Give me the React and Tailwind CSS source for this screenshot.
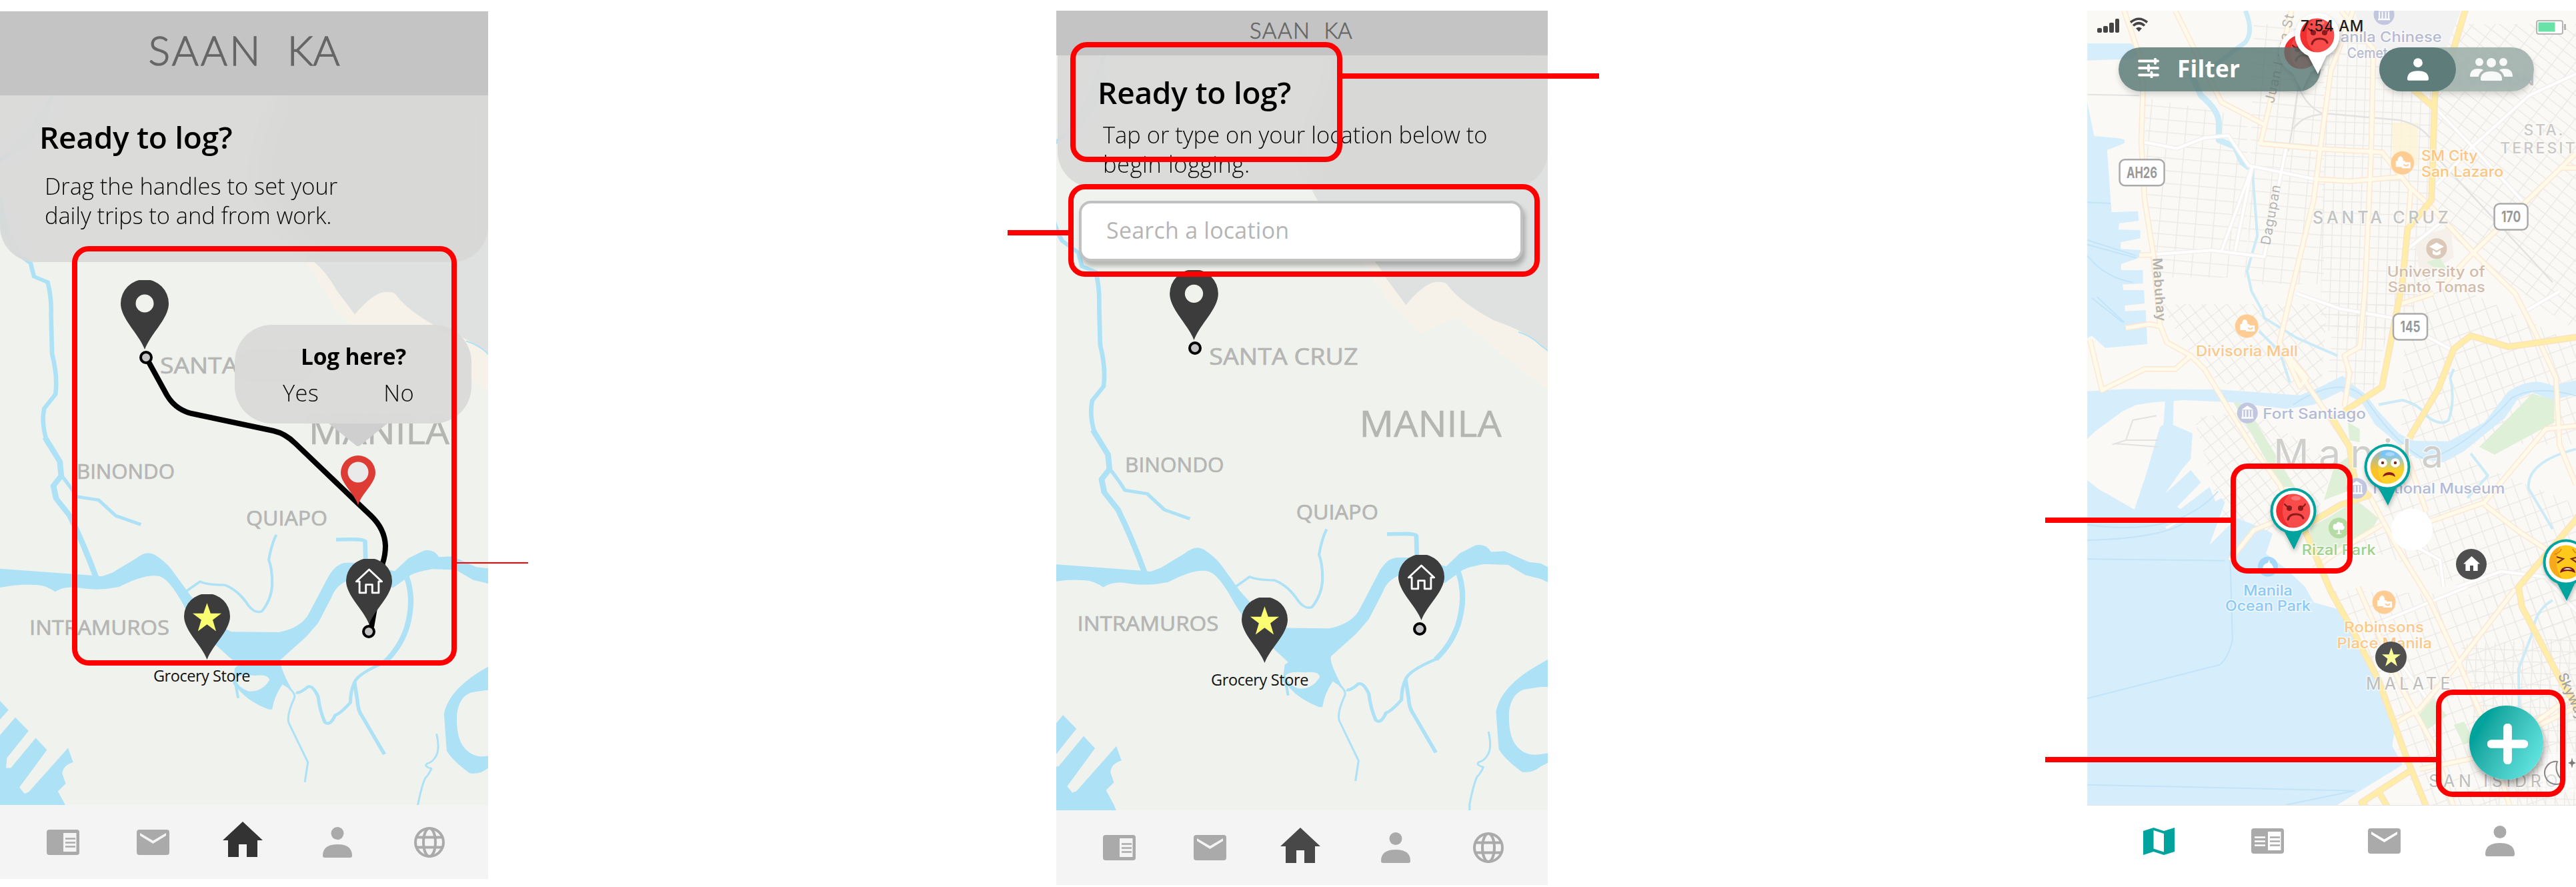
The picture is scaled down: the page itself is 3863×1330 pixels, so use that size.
import { useLayoutEffect, useRef, useState } from "react";

/* Text whose tracking is computed so that it fills a given width. */
function Fit({ w, className = "", children }) {
  const ref = useRef(null);
  const [ls, setLs] = useState(0);
  useLayoutEffect(() => {
    const n = ref.current.textContent.length;
    setLs((w - ref.current.offsetWidth) / n);
  }, [w]);
  return (
    <span className={"block w-max whitespace-nowrap " + className}>
      <span ref={ref} className="inline-block" style={{ letterSpacing: ls + "px" }}>{children}</span>
    </span>
  );
}

const WATER = "#ade1f6";
const LABEL = "#b5b6b4";

function MapText({ x, y, w, s, children }) {
  return (
    <text x={x} y={y} textLength={w} lengthAdjust="spacingAndGlyphs" fontSize={s} fill={LABEL} stroke={LABEL} strokeWidth="0.7" strokeLinejoin="round" fontFamily="'Open Sans', sans-serif">
      {children}
    </text>
  );
}

function GrayMap({ viewBox, className }) {
  return (
    <svg viewBox={viewBox} preserveAspectRatio="none" className={className}>
      <rect width="800" height="1330" fill="#f0f2ed" />
      <g transform="scale(0.5102,0.4209)">
        <path d="M800 780 L900 935 L985 1100 L1060 1190 L1080 1220 L1190 1165 L1300 1270 L1400 1370 L1500 1450 V1100 L1000 900Z" fill="#f6f2ea" />
        <path d="M820 40 L820 345 Q745 520 750 650 Q770 760 850 840 L925 935 Q960 970 990 1035 L1043 1120 Q1095 1045 1130 1040 Q1160 1038 1165 1052 Q1200 1110 1300 1175 Q1390 1210 1435 1262 L1500 1320 V40Z" fill="#dee1df" />
        <path d="M1370 1215 Q1410 1230 1435 1262 L1500 1320" fill="none" stroke={WATER} strokeWidth="4" />
        <path d="M170 180 L150 345 Q120 480 0 570 L-20 600 M0 700 Q10 830 42 895 L90 938 L100 985 L140 1005 Q152 1060 150 1120 L153 1260 Q170 1340 163 1405 L130 1455 Q120 1510 140 1580" fill="none" stroke={WATER} strokeWidth="13" />
      </g>
      <g transform="translate(0,660) scale(0.5102,0.42735)" fill="none" stroke={WATER} strokeLinejoin="round">
        <path d="M132 -10 L176 75 L180 125 L157 160 L165 205 L205 265 Q245 360 285 490" strokeWidth="17" />
        <path d="M185 130 L210 170 L225 198 L290 210 L340 265 L414 296" strokeWidth="11" />
        <path stroke="none" fill={WATER} d="M-20 449 L275 475 L300 478 L330 465 L400 415 Q430 385 455 402 Q490 430 505 455 L560 545 L640 650 L680 672 L820 674 Q880 660 905 615 L960 490 Q985 430 1020 430 L1070 430 L1160 460 L1200 415 L1245 388 Q1275 380 1290 410 L1330 408 L1400 445 L1435 450 L1500 490 V540 L1435 503 L1390 490 L1340 455 L1270 452 Q1210 465 1200 480 L1155 518 L1070 480 Q995 485 975 550 L935 642 L900 690 L825 770 Q818 790 860 880 L830 857 Q805 900 800 945 L790 945 Q735 920 705 880 L685 855 L690 800 L700 790 L640 725 L600 690 L545 590 Q500 490 470 478 Q430 465 350 515 Q290 530 230 518 Q190 510 162 532 Q130 505 100 508 Q50 503 -20 522Z" />
        <path stroke="none" fill="#f0f2ed" d="M692 838 Q700 820 750 826 Q790 820 792 842 Q770 885 730 881 Q700 870 692 838Z" />
        <path d="M690 840 L700 905 M545 532 L588 496 Q610 508 660 508 Q700 525 730 580 Q750 610 770 600 Q800 555 800 500 Q800 450 790 420 Q798 365 812 332" strokeWidth="8" />
        <path d="M988 349 L1030 348 Q1070 347 1073 355 L1075 440" strokeWidth="13" />
        <path d="M1195 480 Q1220 560 1195 660 Q1175 730 1130 780 Q1050 820 1042 850 Q1030 880 1030 920 Q1000 960 985 965 Q970 1005 955 990 Q940 950 935 900 Q920 860 905 865 Q880 890 870 885" strokeWidth="10" />
        <path d="M1195 480 Q1220 560 1195 660 Q1175 730 1130 780" strokeWidth="16" />
        <path d="M1042 850 L1050 910 Q1052 950 1065 970 L1130 1102" strokeWidth="11" />
        <path d="M850 870 Q870 890 865 905 Q840 970 850 995 L905 1130 L896 1200 M1283 1030 Q1295 1090 1278 1115 Q1270 1130 1255 1135 Q1245 1145 1268 1152 Q1260 1175 1250 1185 Q1240 1210 1228 1280 V1310" strokeWidth="6" />
        <path stroke="none" fill={WATER} d="M1500 750 L1435 795 Q1320 870 1305 960 L1313 1090 Q1330 1125 1380 1168 Q1410 1175 1435 1150 L1500 1110 V1095 L1435 1108 Q1390 1118 1362 1075 Q1340 1040 1343 960 Q1350 900 1385 885 L1435 876 H1500Z" />
        <path stroke="none" fill={WATER} d="M0 915 L25 947 L0 980Z M0 1035 L45 973 L84 1020 L20 1115 L18 1150 L32 1150 L105 1045 L138 1087 L57 1218 L72 1240 L84 1235 L200 1080 L215 1130 Q185 1140 183 1170 L193 1205 L170 1232 L192 1280 L210 1330 H0Z" />
      </g>
      <MapText x={240} y={559.5} w={221} s={33.5}>SANTA CRUZ</MapText>
      <MapText x={463} y={666} w={211} s={53}>MANILA</MapText>
      <MapText x={115} y={717.5} w={147} s={31}>BINONDO</MapText>
      <MapText x={369} y={787.5} w={122} s={31}>QUIAPO</MapText>
      <MapText x={44} y={952} w={210} s={31}>INTRAMUROS</MapText>
    </svg>
  );
}

/* Icons */
const PIN = "M36 104 C27 80 0 58 0 35 A36 36 0 0 1 72 35 C72 58 45 80 36 104Z";
const STAR = "M12 0 L15 8.8 H24 L16.8 14.4 L19.6 24 L12 18.2 L4.4 24 L7.2 14.4 L0 8.8 H9Z";

function HolePin({ className }) {
  return (
    <svg viewBox="0 0 72 104" className={className}>
      <path d={PIN} fill="#3c3c3c" />
      <circle cx="36" cy="35" r="13.5" fill="#f0f2ed" />
    </svg>
  );
}
function HomePin({ className }) {
  return (
    <svg viewBox="0 0 72 104" preserveAspectRatio="none" className={className}>
      <path d={PIN} fill="#3c3c3c" />
      <path d="M36 17 L16 36 H21 V54 H31 V41 H41 V54 H51 V36 H56Z" fill="none" stroke="#fff" strokeWidth="3" strokeLinejoin="round" />
    </svg>
  );
}
function StarPin({ className }) {
  return (
    <svg viewBox="0 0 72 104" preserveAspectRatio="none" className={className}>
      <path d={PIN} fill="#3c3c3c" />
      <path d={STAR} transform="translate(13.5,14) scale(1.87)" fill="#fafd72" />
    </svg>
  );
}
const Dot = ({ className }) => (
  <div className={"absolute size-[20px] rounded-full border-[4.500px] border-black bg-[#c4c4c4] " + className} />
);

function Article({ both, bg = "#f4f4f4" }) {
  return (
    <svg viewBox="0 0 49 38" className="w-[49px] h-[38px]">
      <rect width="49" height="38" rx="4" fill="#aaa" />
      <rect x="25" y="5" width="19.500" height="28" fill={bg} />
      <path d="M28 13.500 H43 M28 19.500 H43 M28 25.500 H43" stroke="#aaa" strokeWidth="2.600" />
      {both && <path d="M5 13.500 H21 M5 19.500 H21 M5 25.500 H21" stroke={bg} strokeWidth="2.600" />}
    </svg>
  );
}
function Mail({ bg = "#f4f4f4" }) {
  return (
    <svg viewBox="0 0 49 38" className="w-[49px] h-[38px]">
      <rect width="49" height="38" rx="4" fill="#aaa" />
      <path d="M5 5 L24.500 16.500 L44 5 V9 L24.500 21 L5 9Z" fill={bg} />
    </svg>
  );
}
function House({ color, className = "w-[60px] h-[53px]" }) {
  return (
    <svg viewBox="0 0 60 53" className={className}>
      <path d="M30 0 L60 28 H52 V53 H36 V34 H24 V53 H8 V28 H0Z" fill={color} />
    </svg>
  );
}
function Person({ color = "#aaa", className = "w-[44px] h-[46px]" }) {
  return (
    <svg viewBox="0 0 44 46" className={className}>
      <circle cx="22" cy="9.500" r="9.500" fill={color} />
      <path d="M0 43 Q0 26 22 26 Q44 26 44 43 Q44 46 41 46 H3 Q0 46 0 43Z" fill={color} />
    </svg>
  );
}
function Globe() {
  return (
    <svg viewBox="0 0 46 46" className="size-[46px]" fill="none" stroke="#aaa" strokeWidth="4">
      <circle cx="23" cy="23" r="21" />
      <ellipse cx="23" cy="23" rx="9" ry="21" />
      <path d="M4 15.500 H42 M4 30.500 H42" />
    </svg>
  );
}

function GrayNav({ className, house }) {
  return (
    <nav className={"relative flex items-center bg-[#f4f4f4] " + className}>
      <Article />
      <Mail />
      <div className="-ml-[6px] mb-2"><House color={house} /></div>
      <div className="ml-[4px]"><Person /></div>
      <div className="ml-[7px]"><Globe /></div>
    </nav>
  );
}

function PhoneRoute() {
  return (
    <section className="relative mt-[17px] h-[1301px] w-[732px] flex flex-col">
      <GrayMap viewBox="0 17 732 1190" className="absolute left-0 top-0 w-[732px] h-[1190px]" />
      <header className="relative flex h-[126px] items-center justify-center gap-[37px] bg-[#c4c4c4] pb-[11px] font-['Lato',sans-serif] text-[61px] font-light text-[#666] [-webkit-text-stroke:1.4px_#666]">
        <Fit w={171}>SAAN</Fit>
        <Fit w={79}>KA</Fit>
      </header>
      <div className="relative h-[250px] rounded-b-[54px] bg-[#d7d7d6]/85 pl-[59px] pt-[32px] text-black backdrop-blur-[14px]">
        <Fit w={289} className="text-[46px] leading-[60px] font-semibold">Ready to log?</Fit>
        <div className="mt-[22px] pl-[8px] text-[34.500px] leading-[43.500px] font-light text-[#0a0a0a]">
          <Fit w={439}>Drag the handles to set your</Fit>
          <Fit w={430}>daily trips to and from work.</Fit>
        </div>
      </div>
      <div className="relative flex-1">
        <HolePin className="absolute left-[181px] top-[27px] w-[72px] h-[104px]" />
        <svg viewBox="0 393 732 814" className="absolute left-0 top-0 w-[732px] h-[814px]">
          <path d="M222 541 L250 592 Q264 616 292 621 L410 646 Q428 650 443 665 L537 755 L556 773 Q577 793 578 818 Q578 832 574 844 L557 940" fill="none" stroke="#000" strokeWidth="8" />
          <path d="M537 757.500 C532 740 511 725 511 709 A26 26 0 0 1 563 709 C563 725 542 740 537 757.500Z" fill="#df3b35" />
          <ellipse cx="537" cy="708" rx="15.500" ry="15.500" fill="#eaeaea" />
        </svg>
        <Dot className="left-[208.500px] top-[133px]" />
        <HomePin className="absolute left-[519px] top-[445px] w-[69px] h-[98px]" />
        <Dot className="left-[542.500px] top-[544px]" />
        <StarPin className="absolute left-[276px] top-[498px] w-[69px] h-[98px]" />
        <Fit w={145} className="absolute left-[230px] top-[606px] text-[23.500px] leading-[28px] text-[#111]">Grocery Store</Fit>
        <div className="absolute left-[352px] top-[94px] h-[148px] w-[355px] rounded-[56px] bg-[#d9d9d8]/95 text-center text-black backdrop-blur-[10px]">
          <Fit w={158} className="ml-[99px] mt-[25px] text-[33.500px] leading-[44px] font-bold">Log here?</Fit>
          <div className="mt-[11px] flex text-[34.500px] leading-[44px] font-light text-[#0a0a0a]">
            <Fit w={54} className="ml-[72px]">Yes</Fit>
            <Fit w={46} className="ml-[97px]">No</Fit>
          </div>
        </div>
        <svg viewBox="0 0 88 35" className="absolute left-[493px] top-[242px] w-[88px] h-[35px]"><path d="M0 0 H88 L47 33 Q44 35 41 33Z" fill="#cfcfcf" /></svg>
      </div>
      <GrayNav className="h-[111px] gap-[86px] pl-[70px]" house="#333" />
      <div className="absolute left-[108px] top-[352px] h-[629px] w-[577px] rounded-[25px] border-8 border-[#f00]" />
      <div className="absolute left-[685px] top-[826px] h-[2px] w-[107px] bg-[#f00]" />
    </section>
  );
}

function PhoneSearch() {
  return (
    <section className="relative ml-[852px] mt-[16px] h-[1311px] w-[737px] flex flex-col">
      <GrayMap viewBox="12.9 38 729.7 1178" className="absolute left-0 top-0 w-[737px] h-[1199px]" />
      <header className="relative flex h-[67px] items-center justify-center gap-[20px] bg-[#c4c4c4] pb-[7px] pr-[4px] font-['Lato',sans-serif] text-[33px] font-light text-[#666] [-webkit-text-stroke:0.700px_#666]">
        <Fit w={92}>SAAN</Fit>
        <Fit w={42}>KA</Fit>
      </header>
      <div className="relative ml-[2px] h-[198px] rounded-b-[54px] bg-[#d7d7d6]/85 pl-[60px] pt-[25px] text-black backdrop-blur-[14px]">
        <Fit w={290} className="text-[46px] leading-[60px] font-semibold">Ready to log?</Fit>
        <div className="mt-[12px] pl-[8px] text-[34.500px] leading-[43.500px] font-light text-[#0a0a0a]">
          <Fit w={576}>Tap or type on your location below to</Fit>
          <Fit w={221}>begin logging.</Fit>
        </div>
      </div>
      <div className="relative ml-[34px] mt-[20px] flex h-[91px] w-[666px] items-center rounded-[18px] border-4 border-[#c1c1c1] bg-white pl-[37px] pb-[2px] text-[34px] text-[#b5b5b5] shadow-[3px_7px_7px_rgba(0,0,0,0.25)]">
        <Fit w={274}>Search a location</Fit>
      </div>
      <div className="relative flex-1">
        <HolePin className="absolute left-[170px] top-[13px] w-[73px] h-[105px]" />
        <Dot className="left-[198px] top-[120px]" />
        <HomePin className="absolute left-[513px] top-[440px] w-[69px] h-[98px]" />
        <Dot className="left-[534.500px] top-[540.500px]" />
        <StarPin className="absolute left-[278px] top-[504px] w-[69px] h-[98px]" />
        <Fit w={146} className="absolute left-[232px] top-[613px] text-[23.500px] leading-[28px] text-[#111]">Grocery Store</Fit>
      </div>
      <GrayNav className="h-[112px] gap-[87px] pl-[70px]" house="#484848" />
      <div className="absolute left-[21px] top-[47px] h-[180px] w-[408px] rounded-[25px] border-8 border-[#f00]" />
      <div className="absolute left-[429px] top-[94px] h-[8px] w-[385px] bg-[#f00]" />
      <div className="absolute left-[18px] top-[260px] h-[139px] w-[707px] rounded-[25px] border-8 border-[#f00]" />
      <div className="absolute left-[-73px] top-[329px] h-[8px] w-[93px] bg-[#f00]" />
    </section>
  );
}

/* City map */
const peach = [
  "M245 48 L290 250 L300 400 L295 640 L305 900 L330 1140 L350 1460 L370 1540 L440 1600 L480 1660 L555 1850 L620 2010 L700 2180 L760 2370",
  "M290 1148 L330 1145", "M250 1475 L320 1458 L350 1468",
  "M145 1530 L180 1755 L305 1660 L395 1660 L440 1600",
  "M395 48 L450 220 L530 460 L655 560", "M735 48 L690 350 L645 640",
  "M915 48 L850 320 L820 660 L800 900 L735 1310 L700 1540 L760 1740 L780 1700 L710 1570",
  "M710 1570 L830 1840 L900 2000", "M880 48 L975 220 L968 700 L950 1310 L935 1560 L890 1600 L905 1680 L890 1830",
  "M640 645 L820 670 L1000 685 L1080 840 L1150 940 L1270 1140 L1390 1320 L1450 1500 L1510 1700 L1520 2000 L1568 2180",
  "M800 805 L905 815 L1060 795", "M1085 840 L1075 1030", "M1568 690 L1420 910 L1265 1140 L1180 1280", "M1530 755 H1600",
  "M1050 1370 L1130 1330 L1150 1320",
  "M1390 2650 L1225 2980 L1110 3190 L1040 3250", "M930 2640 L1060 3100 L1150 3350 L1210 3630",
  "M960 2220 L1040 2450 L1140 2700 L1225 2980 L1300 3250 L1375 3630",
  "M1060 2000 L1130 2300", "M1140 2345 L1300 2260 L1480 1930 L1600 1910", "M1300 2270 L1400 2390 L1490 2480",
  "M555 2520 L625 2385 L680 2350", "M1000 2360 L880 2470 L800 2560", "M1110 3460 L1270 3410 L1568 3180",
  "M1450 3250 L1600 3080",
];
const yellow = [
  "M1245 40 L1200 270 L1155 420 L1145 900 L1075 1030 L1060 1270 L1000 1740 L890 1850",
  "M1090 400 L1150 480", "M1600 1510 L1370 1560 L1260 1510 L1210 1570 L1165 1750 L1080 1970",
  "M850 1870 L905 2010 L920 2160 L960 2230 L880 2270 L770 2370 L850 2660 L905 2810 L990 3060 L1070 3400 L1130 3630",
  "M1600 2280 L1400 2640 L1410 2730 L1530 3080 L1600 3250", "M1090 3460 L1050 3500 L940 3610 L960 3640 M990 3560 L1020 3640",
];
const white = [
  "M305 640 L400 668 L480 620 L550 610 L610 745 L800 805", "M620 750 L530 1130", "M720 660 L655 1155 L500 1126 L320 1145", "M620 750 L570 1130",
  "M1600 310 L1430 430 L1265 660 L1160 830", "M1165 500 L1265 660 L1415 910", "M1190 980 L1075 1120",
  "M750 1320 L880 1390 L1030 1430 L1200 1570", "M1420 1400 L1520 1310", "M1010 2790 L1250 2640", "M960 2780 L1130 3140",
  "M1090 2450 L1170 2520 L1180 2640", "M1220 2640 L1350 2570 L1500 2600 M1600 1920 L1500 1925", "M1480 2600 L1600 2800",
];

function Roads({ list, edge, fill, w }) {
  return (
    <>
      {list.map((d) => <path key={d} d={d} stroke={edge} strokeWidth={w + 3} />)}
      {list.map((d) => <path key={d} d={d} stroke={fill} strokeWidth={w} />)}
    </>
  );
}

const px = (X) => X / 1.953 - 70;
const py = (Y) => Y / 3 - 16;

function Lab({ a, b, y, s, c, children, spaced, weight = 500 }) {
  return (
    <text x={px(a)} y={py(y)} fontSize={s} textLength={(b - a) / 1.953} lengthAdjust={spaced ? "spacing" : "spacingAndGlyphs"} fill={c} fontWeight={weight} stroke="#fff" strokeOpacity="0.6" strokeWidth="3" paintOrder="stroke">
      {children}
    </text>
  );
}

function Grid({ id, a, w, h }) {
  return (
    <pattern id={id} width={w} height={h} patternUnits="userSpaceOnUse" patternTransform={"rotate(" + a + ")"}>
      <path d={`M0 0 H${w} M0 0 V${h}`} stroke="#eae8e4" strokeWidth="2.600" fill="none" />
    </pattern>
  );
}

const Bag = ({ x, y }) => (
  <g transform={`translate(${px(x)},${py(y)})`}>
    <circle r="17.500" fill="#ffcd94" />
    <path d="M-10 -3 H4 V6 H-10Z M-7 -3 V-6 Q-3 -14 1 -6 V-3 M-1 -1 H12 V8 H-1Z" fill="#fff" />
    <path d="M2 2 Q5.500 7 9 2" stroke="#ffcd94" strokeWidth="2" fill="none" />
  </g>
);
const Museum = ({ x, y }) => (
  <g transform={`translate(${px(x)},${py(y)})`}>
    <circle r="15.500" fill="#c1c7df" />
    <path d="M-9 -5 L0 -11 L9 -5Z M-9 6 H9 V8.500 H-9Z" fill="#fff" />
    <path d="M-7 -4 V6 M-2.500 -4 V6 M2.500 -4 V6 M7 -4 V6" stroke="#fff" strokeWidth="2" />
  </g>
);
const Shield = ({ x, y, w, children }) => (
  <g transform={`translate(${px(x)},${py(y)})`}>
    <rect x={-w / 2} y="-19.500" width={w} height="39" rx="8" fill="#fff" stroke="#aaa" strokeWidth="2.500" />
    <text y="8" textAnchor="middle" fontSize="23" fontWeight="700" fill="#999" textLength={w - 21} lengthAdjust="spacingAndGlyphs">{children}</text>
  </g>
);

function CityMap() {
  return (
    <svg viewBox="0 0 733 1192" className="absolute left-0 top-0 w-[733px] h-[1192px] font-['Inter',sans-serif] [&_path]:[stroke-linejoin:round]">
      <defs>
        <Grid id="g1" a={5} w={27} h={19} />
        <Grid id="g2" a={-52} w={14} h={26} />
        <Grid id="g3" a={52} w={19} h={15} />
        <Grid id="g4" a={2} w={14} h={17} />
        <Grid id="g5" a={-20} w={17} h={24} />
      </defs>
      <rect width="733" height="1192" fill="#fbf9f5" />
      <path d="M85 130 L240 160 L240 400 L95 400Z" fill="url(#g1)" />
      <path d="M250 20 H355 V410 H240Z" fill="url(#g1)" />
      <path d="M355 20 H515 V360 L480 480 H350Z" fill="url(#g4)" />
      <path d="M530 20 H733 V480 L590 380 L520 310Z" fill="url(#g2)" />
      <path d="M480 380 L590 430 L733 500 V650 H470Z" fill="url(#g5)" />
      <path d="M110 440 H360 L350 580 L250 580 L170 540Z" fill="url(#g3)" />
      <path d="M370 440 H460 L430 570 H360Z" fill="url(#g4)" />
      <path d="M160 610 L250 600 L370 680 L340 770 L210 790Z" fill="url(#g3)" />
      <path d="M480 640 L733 740 V960 L560 860 L400 800Z" fill="url(#g5)" />
      <path d="M370 870 L733 880 V1192 H500Z" fill="url(#g5)" />
      <path d="M560 950 L733 940 V1192 H600Z" fill="url(#g4)" />
      <rect x="458" y="168" width="38" height="64" fill="#fef4d5" opacity="0.8" />
      <path d="M490 340 L545 325 L550 370 L500 400Z" fill="#f6f0ea" />
      <path d="M400 0 H560 L530 80 L430 70Z" fill="#f2f2f2" />
      <g transform="translate(-70,-16) scale(0.51203,0.333333)">
        <g fill="#d6eefb">
          <path d="M137 460 L157 612 L230 622 L247 630 L245 645 L195 675 L208 955 L285 950 L288 993 L230 1005 L228 1033 L292 1035 V1072 L235 1090 V1120 L295 1125 L288 1160 L236 1188 V1215 L300 1215 V1275 L240 1280 L243 1305 L303 1305 L305 1365 L247 1375 V1400 L308 1395 L313 1548 L190 1565 L150 1510 L137 1520Z" />
          <path d="M137 195 L265 195 L295 240 L270 265 L137 272Z" />
          <path d="M137 1760 L250 1750 L520 1752 L760 1778 L820 1740 L885 1690 L905 1720 L950 1770 L990 1850 L1050 1950 L1090 1983 L1195 1985 L1300 1900 L1370 1760 Q1440 1690 1500 1735 L1600 1700 V1760 L1500 1800 L1440 1765 L1400 1790 L1360 1880 L1240 2030 L1180 2080 L1100 2060 L1050 2000 L980 1910 L940 1810 L880 1760 L800 1820 L720 1840 L560 1810 L420 1800 L330 1810 L280 1822 L240 1850 L160 1940 L137 1975Z" />
          <path d="M365 1800 H390 L388 1910 L445 1950 L440 2065 L415 2110 L365 2220 L440 2115 L470 2170 L400 2280 L410 2290 L495 2190 L515 2265 L365 2370 L370 2380 L530 2240 L540 2260 L495 2450 L575 2330 L640 2370 L680 2400 L660 2490 L720 2560 L775 2640 L800 2710 L870 2740 L940 2920 L1040 3250 L1030 3355 L1060 3440 L860 3630 H137 V2160 L170 2200 L275 2292 L310 2130 L350 1920 L360 1910Z" />
        </g>
        <g fill="#dff0d8">
          <path d="M565 1808 L600 1820 L745 2190 L705 2190Z" />
          <path d="M790 2370 L840 2330 L925 2250 L990 2330 L960 2410 L870 2500 L790 2480Z" />
          <path d="M1440 1770 L1505 1800 V1900 L1330 2045 L1285 2010 L1370 1880Z" />
          <path d="M900 1900 L935 1930 V1990 L905 1980Z M860 2100 L905 2050 L915 2200 L830 2250Z M1130 1180 L1170 1160 L1190 1210 L1150 1200Z" />
          <path d="M1100 3230 L1150 3140 L1190 3220 L1125 3290Z M1210 3260 L1240 3245 L1270 3330 L1240 3350Z" />
        </g>
        <g fill="none" className="[&_path]:[vector-effect:non-scaling-stroke]">
          <g stroke="#cdebf6" strokeWidth="6">
            <path d="M600 48 Q625 140 600 190 L470 340" strokeWidth="7" />
            <path d="M440 330 L470 430 Q525 500 522 560 V630 L570 660 L590 730 L612 755" strokeWidth="9" />
            <path d="M620 760 L635 1060 L605 1220 L618 1310 L650 1400 L655 1430 L750 1520 L870 1600" strokeWidth="4" />
            <path d="M640 1490 L700 1580 L730 1720 M990 1820 L1060 1800 Q1110 1820 1130 1870 Q1170 1920 1195 1890 Q1215 1800 1200 1700 L1210 1660" strokeWidth="4" />
            <path d="M1250 2240 L1310 2140 L1260 2040 M1568 2020 Q1420 2080 1430 2200 L1500 2380" strokeWidth="4" />
            <path d="M1500 2700 Q1450 2740 1440 2850 L1400 3010 L1402 3190" strokeWidth="4" />
          </g>
          <g stroke="#c2e3f8" strokeWidth="2">
            <path d="M137 910 L205 915 M137 1080 L280 1150 M137 1100 L280 1160 M137 1150 Q190 1250 270 1270 M150 1340 L240 1450 M165 1335 L245 1450 M137 2515 L540 2522 M555 2480 L562 2880 Q550 2960 525 2990 L137 3142 M137 3530 L920 3557 L720 3620 M137 2360 Q400 2420 520 2210 M137 2430 Q380 2420 440 2330" />
            <path d="M740 1820 Q880 1680 950 1790 Q1040 2000 1130 2070 Q1250 2010 1380 1790 Q1450 1730 1568 1780" />
          </g>
          <g stroke="#e2e2e2" strokeWidth="2.500">
            <path d="M755 390 L735 600 L725 680 M740 580 Q770 510 850 512 L1050 540 Q1110 560 1140 620 M755 390 Q780 480 825 510 M1150 690 L1500 1270" />
            <path d="M137 425 L290 430 M210 2000 L250 1980 L270 1890 L340 1870 M250 1980 H345 M215 1995 L345 2010" strokeWidth="2" />
          </g>
          <Roads list={white} edge="#f1f0ee" fill="#ffffff" w={4} />
          <Roads list={peach} edge="#fde7d2" fill="#fffaea" w={5.5} />
          <Roads list={yellow} edge="#fbe3c0" fill="#ffeda8" w={7} />
        </g>
      </g>
      <Museum x={1006} y={65} /><Museum x={606} y={1858} /><Museum x={926} y={2197} />
      <Bag x={1060} y={733} /><Bag x={604} y={1467} /><Bag x={1006} y={2709} />
      <g transform={`translate(${px(1160)},${py(1118)})`}>
        <circle r="15.500" fill="#dcc8b8" /><path d="M-11 -3 L0 -9 L11 -3 L0 3Z M-6 2 V8 Q0 12 6 8 V2 L0 6Z" fill="#fff" />
      </g>
      <g transform={`translate(${px(874)},${py(2375)})`}>
        <circle r="15.500" fill="#b4dba4" /><path d="M-9 -1 Q-9 -7 -4 -6 Q-2 -11 2 -8 Q7 -8 6 -4 Q10 -2 7 2 Q4 4 1 2 L1.500 8 H4 V9 H-4 V8 H-1.500 L-1 2 Q-8 5 -9 -1Z" fill="#fff" />
      </g>
      <g transform={`translate(${px(666)},${py(2549)})`}>
        <circle r="15" fill="#a3d8fa" /><path d="M-8 5 Q-8 -4 0 -6 L2 -11 L3 -6 Q9 -2 8 6Z" fill="#fff" />
      </g>
      <Lab a={836} b={1175} y={190} s={21.5} c="#b5bbd3">Manila Chinese</Lab>
      <Lab a={898} b={1075} y={262} s={21.5} c="#b5bbd3">Cemetery</Lab>
      <Lab a={1150} b={1447} y={385} s={22} c="#c6c6c4">SALVACION</Lab>
      <Lab a={1415} b={1530} y={610} s={23} c="#c9c9c7" spaced>STA.</Lab>
      <Lab a={1346} b={1600} y={691} s={23} c="#c9c9c7" spaced>TERESITA</Lab>
      <Lab a={1115} b={1280} y={724} s={21.5} c="#fdc57f">SM City</Lab>
      <Lab a={1115} b={1356} y={795} s={21.5} c="#fdc57f">San Lazaro</Lab>
      <Lab a={797} b={1195} y={1006} s={25} c="#c3c3c1" spaced>SANTA CRUZ</Lab>
      <Lab a={1015} b={1302} y={1244} s={21.5} c="#d2bba8">University of</Lab>
      <Lab a={1017} b={1302} y={1315} s={21.5} c="#d2bba8">Santo Tomas</Lab>
      <Lab a={455} b={754} y={1602} s={21.5} c="#fbc88b">Divisoria Mall</Lab>
      <Lab a={651} b={953} y={1883} s={21.5} c="#b3bad6">Fort Santiago</Lab>
      <Lab a={682} b={1180} y={2103} s={59} c="#cfcfcd" spaced weight={400}>Manila</Lab>
      <Lab a={973} b={1360} y={2221} s={21.5} c="#b3bad6">National Museum</Lab>
      <Lab a={765} b={982} y={2495} s={21.5} c="#9fd08c">Rizal Park</Lab>
      <Lab a={594} b={738} y={2678} s={21.5} c="#8ccaf5">Manila</Lab>
      <Lab a={541} b={791} y={2748} s={21.5} c="#8ccaf5">Ocean Park</Lab>
      <Lab a={889} b={1123} y={2845} s={21.5} c="#fbc88b">Robinsons</Lab>
      <Lab a={868} b={1146} y={2916} s={21.5} c="#fbc88b">Place Manila</Lab>
      <Lab a={953} b={1200} y={3101} s={25} c="#bdbdbb" spaced weight={400}>MALATE</Lab>
      <Lab a={1137} b={1515} y={3540} s={25} c="#bdbdbb" spaced weight={400}>SAN ISIDRO</Lab>
      <g fill="#b3b3b1" fontSize="20">
        <text transform={`translate(${px(683)},${py(467)}) rotate(-77)`} textLength="136">Juan Luna St</text>
        <text transform={`translate(${px(672)},${py(1105)}) rotate(-80)`} textLength="91">Dagupan</text>
        <text transform={`translate(${px(328)},${py(1162)}) rotate(86)`} fontWeight="600" textLength="95">Mabuhay</text>
        <text transform={`translate(${px(1515)},${py(3038)}) rotate(66)`} fill="#a5a5a3" fontWeight="500">Skyway</text>
      </g>
      <Shield x={297} y={776} w={67}>AH26</Shield>
      <Shield x={1378} y={975} w={50}>170</Shield>
      <Shield x={1083} y={1470} w={51}>145</Shield>
      <circle cx={px(1088)} cy={py(2382)} r="31" fill="#fff" />
    </svg>
  );
}

function Angry() {
  return (
    <g>
      <circle r="25.500" fill="#fa4b4b" />
      <path d="M-6 -25 A25.500 25.500 0 0 0 -4 25 Q-17 14 -16 0 Q-16 -16 -6 -25Z" fill="#f22f2f" />
      <ellipse cx="4" cy="-19" rx="7" ry="3.500" fill="#ff7474" />
      <path d="M-13 -10 Q-9 -5 -3 -5 M18 -10 Q15 -5 9 -5" stroke="#8b1a1c" strokeWidth="2.200" fill="none" strokeLinecap="round" />
      <circle cx="-6" cy="-4" r="4" fill="#8b1a1c" /><circle cx="11" cy="-4" r="4" fill="#8b1a1c" />
      <path d="M-8 13 Q-6 5 3.500 5 Q13 5 15 11" stroke="#8b1a1c" strokeWidth="3.200" fill="none" strokeLinecap="round" />
    </g>
  );
}
function Afraid() {
  return (
    <g>
      <circle r="25.500" fill="url(#fear)" />
      <path d="M-8 -24 A25.500 25.500 0 0 0 -6 24.500 Q-14 14 -14 0 Q-14 -14 -8 -24Z" fill="#f9a825" opacity="0.35" />
      <ellipse cx="4" cy="-19" rx="7" ry="3" fill="#a7d8fb" />
      <circle cx="-7" cy="-6" r="6.800" fill="#fff" /><circle cx="12" cy="-6" r="6.800" fill="#fff" />
      <circle cx="-7" cy="-6" r="2.200" fill="#7a2b12" /><circle cx="12" cy="-6" r="2.200" fill="#7a2b12" />
      <path d="M-7 15 Q-5 8 3 8 Q11 8 12 15 Q3 9 -7 15Z" fill="#8b1a1c" />
    </g>
  );
}
function Tired() {
  return (
    <g>
      <circle r="25.500" fill="#fec91b" />
      <path d="M-8 -24 A25.500 25.500 0 0 0 -6 24.500 Q-14 14 -14 0 Q-14 -14 -8 -24Z" fill="#f8a81c" />
      <path d="M-14 -8 L-4 -5 L-13 1 M18 -8 L8 -5 L17 1" stroke="#7a2b12" strokeWidth="2.200" fill="none" />
      <path d="M-17 -12 Q-10 -13 -7 -20 M10 -20 Q13 -13 20 -12" stroke="#d98914" strokeWidth="1.800" fill="none" />
      <path d="M-9 16 Q-8 7 2 7 Q13 7 14 16 Q2 10 -9 16Z" fill="#7a1a1c" /><path d="M-4 11 Q2 7 9 11Z" fill="#fff" />
    </g>
  );
}
function FacePin({ className, color, face, s = 0 }) {
  return (
    <svg viewBox="-40 -40 80 104" className={"absolute w-[80px] h-[104px] drop-shadow-[1px_4px_3px_rgba(0,0,0,0.25)] " + className}>
      <defs>
        <linearGradient id="fear" x1="0" y1="0" x2="0" y2="1">
          <stop offset="0.150" stopColor="#7cc4f8" /><stop offset="0.600" stopColor="#fed02a" />
        </linearGradient>
      </defs>
      <path d="M-14 30 L1 58 L14 30Z" fill={color} />
      <circle r={34.5 - s} fill={color} />
      <circle r={30.5 - s} fill="#fff" />
      {face}
    </svg>
  );
}

function PhoneCity() {
  return (
    <section className="relative ml-[809px] mt-[16px] h-[1311px] w-[733px]">
      <div className="relative h-[1192px] overflow-hidden border-b border-[#e6e4e0]">
        <CityMap />
        <FacePin className="left-[281px] top-[22px]" color="#fff" face={<Angry />} s={1} />
        <div className="absolute left-[47px] top-[55px] flex h-[66px] w-[303px] items-center rounded-[33px] bg-[#53736f]/80 pl-[29px] text-[35px] font-semibold text-white shadow-[0_5px_9px_rgba(0,0,0,0.15)]">
          <svg viewBox="0 0 32 30" className="mb-1 w-[32px] h-[30px]" stroke="#fff" strokeWidth="3.800" strokeLinecap="round">
            <path d="M2 4.500 H30 M26 1.500 V8 M2 15 H30 M16 11 V19 M2 25.500 H30 M20.500 21.500 V29" />
          </svg>
          <Fit w={94} className="mb-[2px] ml-[27px] font-bold">Filter</Fit>
        </div>
        <FacePin className="left-[305px] top-[-3px]" color="#fff" face={<Angry />} s={1} />
        <div className="absolute left-[438px] top-[55px] flex h-[66px] w-[232px] items-center rounded-[33px] bg-[#a0b0ac]/90 shadow-[0_5px_9px_rgba(0,0,0,0.15)] backdrop-blur-[2px]">
          <div className="flex h-[66px] w-[115px] items-center justify-center rounded-[33px] bg-[#5e7c7a]">
            <Person color="#fff" className="w-[32px] h-[34px]" />
          </div>
          <svg viewBox="0 0 64 34" className="ml-[21px] w-[64px] h-[34px]" fill="#f8faf9">
            <circle cx="14" cy="6" r="6" /><circle cx="50" cy="6" r="6" /><circle cx="32" cy="7" r="7" />
            <path d="M0 28 Q0 16 12 16 Q18 16 20 18 Q13 23 13 28Z M64 28 Q64 16 52 16 Q46 16 44 18 Q51 23 51 28Z M16 33 Q15 20 32 20 Q49 20 48 33 Q48 34 46 34 H18 Q16 34 16 33Z" />
          </svg>
        </div>
        <svg viewBox="0 0 80 24" className="absolute left-[14px] top-[10px] w-[80px] h-[24px]" fill="#444">
          <rect x="1" y="16" width="7" height="7" rx="2" /><rect x="10" y="13" width="7" height="10" rx="2" /><rect x="19" y="8" width="7" height="15" rx="2" /><rect x="28" y="2" width="6" height="21" rx="2" />
          <path d="M51 7.500 Q63.500 -3 76 7.500 M55 12.500 Q63.500 5 72 12.500" fill="none" stroke="#444" strokeWidth="3.600" /><path d="M59 16.500 Q63.500 13 68 16.500 L63.500 21.500Z" />
        </svg>
        <Fit w={95} className="absolute left-[320px] top-[9px] font-['Inter',sans-serif] text-[22.500px] leading-[28px] font-medium text-[#1c1c1c]">7:54 AM</Fit>
        <svg viewBox="0 0 46 22" className="absolute left-[673px] top-[14px] w-[46px] h-[22px]">
          <rect x="1" y="1" width="39" height="20" rx="3" fill="#fff" stroke="#b5b5b3" strokeWidth="2" /><rect x="3.500" y="3.500" width="25" height="14" fill="#68e2a6" /><path d="M42 6 H45 V15 H42Z" fill="#b5b5b3" />
        </svg>
        <FacePin className="left-[269px] top-[710px]" color="#00a39d" face={<Angry />} />
        <FacePin className="left-[410px] top-[644px]" color="#00a39d" face={<Afraid />} />
        <FacePin className="left-[678px] top-[787px]" color="#00a39d" face={<Tired />} />
        <div className="absolute left-[553px] top-[807px] flex size-[46px] items-center justify-center rounded-full bg-[#4f4f4f]">
          <House color="#fff" className="mb-[3px] w-[25px] h-[22px]" />
        </div>
        <div className="absolute left-[432px] top-[946px] flex size-[47px] items-center justify-center rounded-full bg-[#4f4f4f]">
          <svg viewBox="0 0 24 24" className="mb-[2px] size-[28px]"><path d={STAR} fill="#fafd9a" /></svg>
        </div>
        <svg viewBox="0 0 56 60" className="absolute left-[683px] top-[1112px] w-[56px] h-[60px]">
          <rect width="56" height="60" fill="#fff" opacity="0.5" />
          <path d="M22 14 A17 17 0 1 0 32 43 A24 24 0 0 1 22 14Z" fill="none" stroke="#888" strokeWidth="2" />
          <path d="M44 8 L45.500 14 L50 16 L45.500 18 L44 24 L42.500 18 L38 16 L42.500 14Z" fill="#777" />
        </svg>
        <div className="absolute left-[573px] top-[1042px] flex size-[111px] items-center justify-center rounded-full bg-linear-120 from-[#00a29c] from-20% to-[#63e6e2] to-90% shadow-[2px_7px_10px_rgba(0,0,0,0.35)]">
          <svg viewBox="0 0 60 60" className="mt-1 ml-1 size-[61px]"><path d="M30 6 V54 M6 30 H54" stroke="#fff" strokeWidth="12.500" strokeLinecap="round" /></svg>
        </div>
      </div>
      <nav className="flex h-[106px] items-center justify-between bg-white pl-[84px] pr-[92px]">
        <svg viewBox="0 0 47 41" className="w-[47px] h-[41px]">
          <path d="M0 5 L15.500 0 L31 5 L47 0 V36 L31 41 L15.500 36 L0 41Z" fill="#00a39d" /><path d="M15.500 4 L31 9 V36.500 L15.500 31.500Z" fill="#fff" />
        </svg>
        <div className="-ml-[12px]"><Article both bg="#fff" /></div>
        <Mail bg="#fff" />
        <Person />
      </nav>
      <div className="absolute left-[215px] top-[679px] h-[165px] w-[183px] rounded-[25px] border-8 border-[#f00]" />
      <div className="absolute left-[-63px] top-[760px] h-[8px] w-[280px] bg-[#f00]" />
      <div className="absolute left-[523px] top-[1018px] h-[161px] w-[194px] rounded-[25px] border-8 border-[#f00]" />
      <div className="absolute left-[-63px] top-[1119px] h-[8px] w-[588px] bg-[#f00]" />
    </section>
  );
}

export default function App() {
  return (
    <main className="flex h-[1330px] w-[3863px] items-start overflow-hidden bg-white font-['Open_Sans',sans-serif] [&>section]:shrink-0">
      <PhoneRoute />
      <PhoneSearch />
      <PhoneCity />
    </main>
  );
}
